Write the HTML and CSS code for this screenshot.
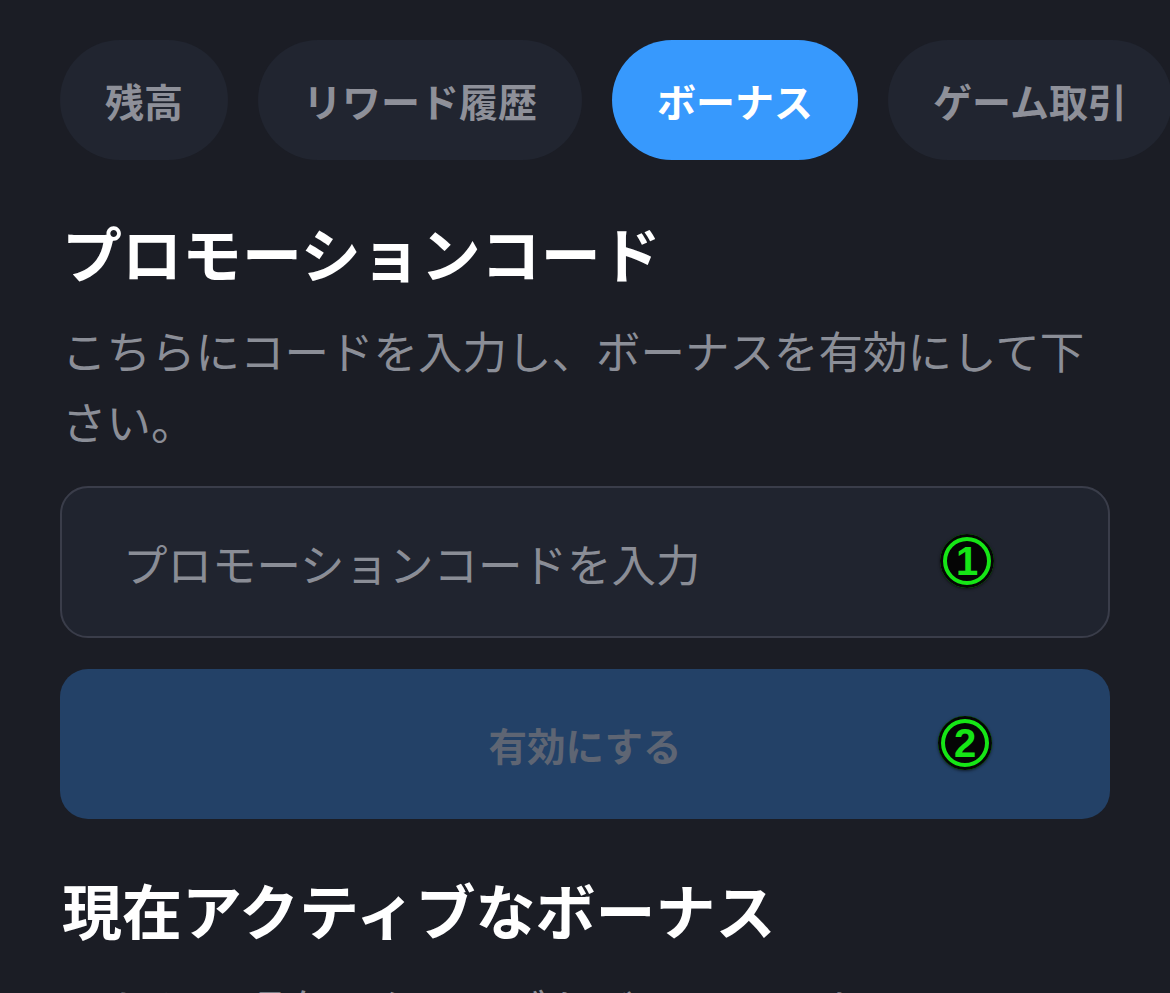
FILE: index.html
```html
<!DOCTYPE html>
<html lang="ja">
<head>
<meta charset="utf-8">
<title>ボーナス</title>
<link rel="stylesheet" href="styles.css">
</head>
<body>
<div class="page">
  <nav class="tabs">
    <span class="tab">残高</span>
    <span class="tab">リワード履歴</span>
    <span class="tab tab-active">ボーナス</span>
    <span class="tab">ゲーム取引</span>
  </nav>

  <h2 class="heading">プロモーションコード</h2>
  <p class="desc">こちらにコードを入力し、ボーナスを有効にして下さい。</p>

  <div class="field">
    <input class="input" type="text" placeholder="プロモーションコードを入力">
    <span class="badge">1</span>
  </div>

  <div class="field field-btn">
    <button class="submit" type="button">有効にする</button>
    <span class="badge badge-2">2</span>
  </div>

  <h2 class="heading heading-2">現在アクティブなボーナス</h2>
  <p class="desc desc-2">こちらは現在アクティブなボーナスです。</p>
</div>
</body>
</html>
```

FILE: styles.css
```css
html, body {
  margin: 0;
  padding: 0;
  background: #1b1d25;
  height: 100%;
  overflow: hidden;
}

body {
  font-family: "Noto Sans CJK JP", "Noto Sans", sans-serif;
}

.page {
  padding: 40px 60px 0 60px;
}

.tabs {
  display: flex;
  gap: 30px;
  flex-wrap: nowrap;
  margin-right: -60px;
}

.tab {
  flex: 0 0 auto;
  height: 120px;
  padding: 0 45px;
  border-radius: 60px;
  background: #212530;
  color: #8e9099;
  font-size: 39px;
  font-weight: 700;
  line-height: 120px;
  white-space: nowrap;
}

.tab-active {
  background: #3799fd;
  color: #ffffff;
}

.heading {
  margin: 50px 0 0 2px;
  color: #ffffff;
  font-size: 60px;
  font-weight: 700;
  line-height: 84px;
}

.heading-2 {
  margin-top: 48px;
}

.desc {
  margin: 20px 0 0 2px;
  color: #8b8e97;
  font-size: 44.5px;
  line-height: 71px;
  font-weight: 400;
}

.desc-2 {
  margin-top: 22px;
}

.field {
  position: relative;
  margin-top: 30px;
}

.field-btn {
  margin-top: 31px;
}

.input {
  display: block;
  box-sizing: border-box;
  width: 100%;
  height: 152px;
  padding: 0 0 0 61px;
  border: 2.5px solid #3a3d4a;
  border-radius: 28px;
  background: #20242f;
  color: #ffffff;
  font-family: "Noto Sans CJK JP", "Noto Sans", sans-serif;
  font-size: 44.5px;
  outline: none;
}

.input::placeholder {
  color: #8a8d96;
}

.submit {
  display: block;
  width: 100%;
  height: 150px;
  border: none;
  border-radius: 28px;
  background: #234167;
  color: #5e6573;
  font-family: "Noto Sans CJK JP", "Noto Sans", sans-serif;
  font-size: 38.5px;
  font-weight: 700;
  padding: 0;
}

.badge {
  position: absolute;
  top: 48px;
  right: 116px;
  width: 54px;
  height: 54px;
  border-radius: 50%;
  background: #050505;
  box-shadow: inset 0 0 0 3px #050505, inset 0 0 0 7px #16e616, 0 1px 3px rgba(0, 0, 0, 0.6);
  color: #16e616;
  font-family: "Liberation Sans", Arial, sans-serif;
  font-size: 40px;
  font-weight: 700;
  line-height: 55px;
  text-align: center;
}

.badge-2 {
  top: 47px;
  right: 118px;
}
```
